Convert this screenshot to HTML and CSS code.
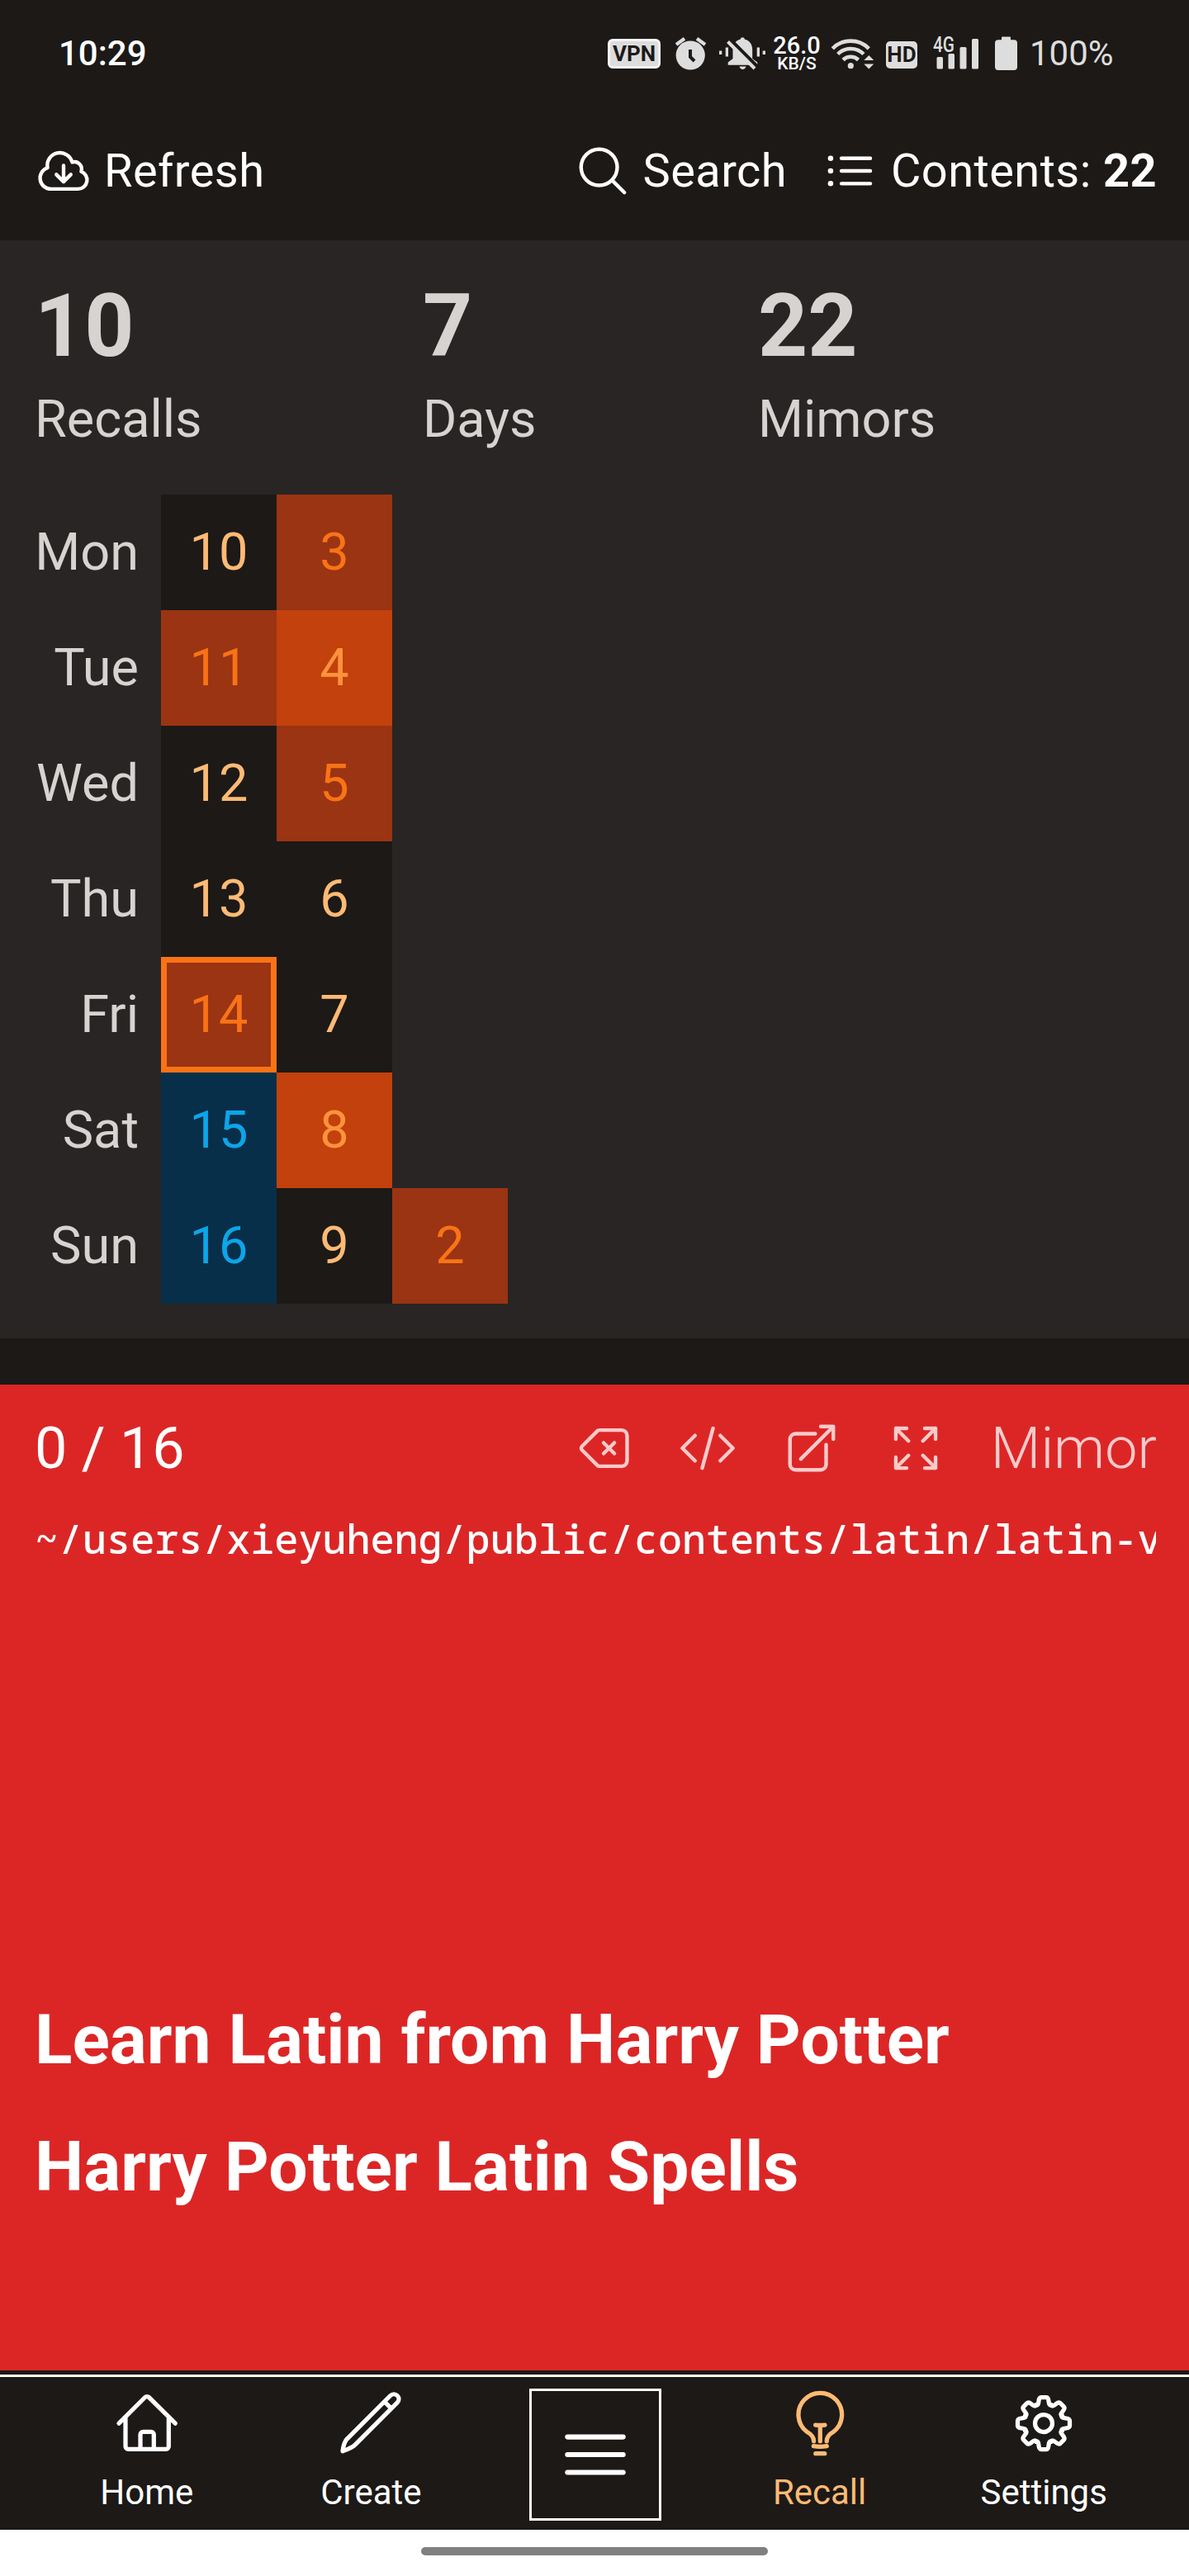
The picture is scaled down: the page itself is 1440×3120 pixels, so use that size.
FILE: index.html
```html
<!DOCTYPE html>
<html lang="en">
<head>
<meta charset="utf-8">
<title>Mimor - Recall</title>
<link rel="stylesheet" href="styles.css">
</head>
<body>
<div class="status-bar">
  <span class="clock">10:29</span>
  <div class="status-icons">
    <span class="tag vpn">VPN</span>
    <svg width="37" height="40" viewBox="0 0 37 40"><circle cx="18.2" cy="22" r="17.6" fill="#ddd"/><path d="M1 9 11 1.8M26 1.8 36 9" stroke="#ddd" stroke-width="4.2"/><path d="M18 15v9l5 5" fill="none" stroke="#1c1917" stroke-width="4"/></svg>
    <svg width="56" height="40" viewBox="0 0 56 40"><path d="M28.3.3c1.500 0 2.500 1 2.500 2.300C37 4 40.200 9 40.200 15v11l6.100 4.500v3.200H10.700v-3.200L16.500 26V15c0-6 3.200-11 9.300-12.400C25.800 1.300 26.800.3 28.300.3ZM24.500 35.500h8c-1 4.500-7 4.500-8 0ZM0 16.500h3.300V21H0ZM7.700 12.500H11v11H7.700ZM45.700 12.500H49v11h-3.300ZM52.700 16.500H56V21h-3.300Z" fill="#ddd"/><path d="M13 2.500 46.500 36" stroke="#1c1917" stroke-width="4.500"/><path d="M10.500 5.500 43 38" stroke="#ddd" stroke-width="4"/></svg>
    <span class="speed"><b>26.0</b><small>KB/S</small></span>
    <svg width="53" height="42" viewBox="0 0 53 42"><g fill="none" stroke="#ddd" stroke-width="4.600"><path d="M2.300 14.800A31 31 0 0 1 46.300 14.800"/><path d="M8.700 21.500A22 22 0 0 1 39.900 21.500"/><path d="M15 28.500A13.500 13.500 0 0 1 33.600 28.500"/></g><circle cx="24.300" cy="35.700" r="3.600" fill="#ddd"/><path d="m46.300 23 6 6h-12ZM46.300 39.500l6-6h-12Z" fill="#ddd"/></svg>
    <span class="tag hd">HD</span>
    <svg class="solid" width="56" height="42" viewBox="0 0 56 42"><text class="net" x="0" y="19" textLength="26" lengthAdjust="spacingAndGlyphs">4G</text><rect x="4.500" y="25" width="7.500" height="14.500" rx="1.500"/><rect x="18.500" y="21" width="7.500" height="18.500" rx="1.500"/><rect x="32.500" y="13" width="8" height="26.500" rx="1.500"/><rect x="47" y="3" width="8" height="36.500" rx="1.500"/></svg>
    <svg class="solid" width="27" height="42" viewBox="0 0 27 42"><path d="M9 .5h9a1 1 0 0 1 1 1v2.700h4a4 4 0 0 1 4 4V37a4 4 0 0 1-4 4H4a4 4 0 0 1-4-4V8.200a4 4 0 0 1 4-4h4V1.500a1 1 0 0 1 1-1Z"/></svg>
    <span class="percent">100%</span>
  </div>
</div>

<header class="toolbar">
  <a class="tool"><svg class="icon" viewBox="0 0 24 24"><path d="M12 9.750v6.750m0 0-3-3m3 3 3-3m-8.250 6a4.500 4.500 0 0 1-1.410-8.775 5.250 5.250 0 0 1 10.233-2.330 3 3 0 0 1 3.758 3.848A3.752 3.752 0 0 1 18 19.500H6.750Z"/></svg>Refresh</a>
  <div class="tools">
    <a class="tool"><svg class="icon" viewBox="0 0 24 24"><path d="m21 21-5.197-5.197m0 0A7.500 7.500 0 1 0 5.196 5.196a7.500 7.500 0 0 0 10.607 10.607Z"/></svg>Search</a>
    <a class="tool"><svg class="icon" viewBox="0 0 24 24"><path d="M8.250 6.750h12M8.250 12h12m-12 5.250h12M3.750 6.750h.007v.008H3.750V6.750Zm.375 0a.375.375 0 1 1-.750 0 .375.375 0 0 1 .750 0ZM3.750 12h.007v.008H3.750V12Zm.375 0a.375.375 0 1 1-.750 0 .375.375 0 0 1 .750 0Zm-.375 5.250h.007v.008H3.750v-.008Zm.375 0a.375.375 0 1 1-.750 0 .375.375 0 0 1 .750 0Z"/></svg><span>Contents: <b>22</b></span></a>
  </div>
</header>

<section class="summary">
  <div class="stats">
    <div class="stat"><strong>10</strong><span>Recalls</span></div>
    <div class="stat"><strong>7</strong><span>Days</span></div>
    <div class="stat"><strong>22</strong><span>Mimors</span></div>
  </div>
  <div class="calendar">
    <span class="day">Mon</span><span class="cell">10</span><span class="cell warm">3</span><span></span>
    <span class="day">Tue</span><span class="cell warm">11</span><span class="cell hot">4</span><span></span>
    <span class="day">Wed</span><span class="cell">12</span><span class="cell warm">5</span><span></span>
    <span class="day">Thu</span><span class="cell">13</span><span class="cell">6</span><span></span>
    <span class="day">Fri</span><span class="cell warm today">14</span><span class="cell">7</span><span></span>
    <span class="day">Sat</span><span class="cell future">15</span><span class="cell hot">8</span><span></span>
    <span class="day">Sun</span><span class="cell future">16</span><span class="cell">9</span><span class="cell warm">2</span>
  </div>
</section>

<main class="card">
  <div class="card-head">
    <span class="progress">0 / 16</span>
    <div class="actions">
      <svg class="icon" viewBox="0 0 24 24"><path d="M12 9.750 14.250 12m0 0 2.250 2.250M14.250 12l2.250-2.250M14.250 12 12 14.250m-2.580 4.920-6.374-6.375a1.125 1.125 0 0 1 0-1.590L9.420 4.830c.210-.211.497-.330.795-.330H19.500a2.250 2.250 0 0 1 2.250 2.250v10.500a2.250 2.250 0 0 1-2.250 2.250h-9.284c-.298 0-.585-.119-.795-.330Z"/></svg>
      <svg class="icon" viewBox="0 0 24 24"><path d="M17.250 6.750 22.500 12l-5.250 5.250m-10.500 0L1.500 12l5.250-5.250m7.500-3-4.500 16.500"/></svg>
      <svg class="icon" viewBox="0 0 24 24"><path d="M13.500 6H5.250A2.250 2.250 0 0 0 3 8.250v10.500A2.250 2.250 0 0 0 5.250 21h10.500A2.250 2.250 0 0 0 18 18.750V10.500m-10.500 6L21 3m0 0h-5.250M21 3v5.250"/></svg>
      <svg class="icon" viewBox="0 0 24 24"><path d="M3.750 3.750v4.500m0-4.500h4.500m-4.500 0L9 9M3.750 20.250v-4.500m0 4.500h4.500m-4.500 0L9 15M20.250 3.750h-4.500m4.500 0v4.500m0-4.500L15 9m5.250 11.250h-4.500m4.500 0v-4.500m0 4.500L15 15"/></svg>
      <span class="kind">Mimor</span>
    </div>
  </div>
  <div class="path">~/users/xieyuheng/public/contents/latin/latin-v</div>
  <div class="titles">
    <h1>Learn Latin from Harry Potter</h1>
    <h1>Harry Potter Latin Spells</h1>
  </div>
</main>

<nav class="nav">
  <a class="nav-item"><svg class="nav-icon" viewBox="0 0 84 84"><path d="M8 42.200 39.700 10.500a3.300 3.300 0 0 1 4.600 0L76.300 42.200M16 35v35a3.300 3.300 0 0 0 3.300 3.300H65a3.300 3.300 0 0 0 3.300-3.300V35M34 73.300V55.600a3.300 3.300 0 0 1 3.300-3.300H47a3.300 3.300 0 0 1 3.300 3.300v17.700"/></svg>Home</a>
  <a class="nav-item"><svg class="nav-icon" viewBox="0 0 84 84"><path d="M65.800 8.500A5.900 5.900 0 0 1 74.200 16.900L23 68.100Q19.500 71.700 8 75.800 9.500 64.500 13.500 60.800ZM58.500 15.800 67 24.200"/></svg>Create</a>
  <a class="menu"><svg viewBox="0 0 24 24"><path d="M3.750 6.750h16.500M3.750 12h16.500m-16.500 5.250h16.500"/></svg></a>
  <a class="nav-item active"><svg class="nav-icon" viewBox="0 0 84 84"><path d="M34.600 63.700c0-4.500-2.700-8.200-8.500-11.400A26.300 26.300 0 1 1 58.500 52.300c-5.600 3.200-8.300 6.900-8.300 11.400M42.300 44.300v19.400M36.600 44.100q5.700.700 11.400 0M34.300 69.700q8 1.500 16 0M36.800 78.700h11"/></svg>Recall</a>
  <a class="nav-item"><svg class="nav-icon" viewBox="-42 -42 84 84"><defs><path id="tooth" d="M-9.200-22.200C-6.500-21.100-6.300-24.500-6-27-5.600-30.800-4.600-31.500-3-31.500H3C4.600-31.500 5.600-30.800 6-27 6.300-24.500 6.500-21.100 9.200-22.200"/></defs><use href="#tooth"/><use href="#tooth" transform="rotate(45)"/><use href="#tooth" transform="rotate(90)"/><use href="#tooth" transform="rotate(135)"/><use href="#tooth" transform="rotate(180)"/><use href="#tooth" transform="rotate(225)"/><use href="#tooth" transform="rotate(270)"/><use href="#tooth" transform="rotate(315)"/><circle r="10.500"/></svg>Settings</a>
</nav>
<div class="gesture"><span class="pill"></span></div>
</body>
</html>
```
FILE: styles.css
```css
* { box-sizing: border-box; }
body {
  margin: 0;
  width: 1440px;
  height: 3120px;
  display: flex;
  flex-direction: column;
  overflow: hidden;
  background: #1c1917;
  color: #fff;
  font-family: Roboto, "Liberation Sans", sans-serif;
}
svg { display: block; fill: none; overflow: visible; }
.solid { fill: #ddd; }

.status-bar {
  height: 122px;
  flex: none;
  display: flex;
  justify-content: space-between;
  padding: 8px 0 0 71px;
  font-size: 42px;
  line-height: 114px;
}
.status-icons {
  width: 704px;
  display: grid;
  grid-template-columns: 82px 53px 64px 71px 67px 57px 75px 42px auto;
  align-items: center;
  line-height: 1;
}
.clock { line-height: 114px; font-weight: 500; }
.percent { color: #ddd; line-height: 114px; }
.tag {
  display: flex;
  align-items: center;
  justify-content: center;
  background: #ddd;
  color: #1c1917;
  font-weight: 700;
  font-size: 26px;
}
.vpn { width: 64px; height: 36px; border: 3px solid #f5f5f5; border-radius: 6px; }
.hd { width: 38px; height: 33px; border-radius: 5px; margin-top: 2px; }
.net { font: 500 26px Roboto, sans-serif; }
.speed {
  width: 60px;
  display: flex;
  flex-direction: column;
  align-items: center;
  white-space: nowrap;
}
.speed b { font-size: 29px; font-weight: 500; line-height: 24px; }
.speed small { font-size: 21px; font-weight: 500; line-height: 20px; }

.icon {
  width: 70px;
  height: 70px;
  flex: none;
  stroke: currentColor;
  stroke-width: 1.5;
  stroke-linecap: round;
  stroke-linejoin: round;
}
.toolbar {
  height: 169px;
  flex: none;
  padding: 0 39px 0 42px;
  display: flex;
  align-items: center;
  justify-content: space-between;
  font-size: 56px;
  line-height: 84px;
  letter-spacing: 0.4px;
}
.tools { display: flex; gap: 42px; }
.tool { display: flex; align-items: center; gap: 14px; }

.summary {
  height: 1330px;
  flex: none;
  padding: 42px;
  background: #292524;
  color: #d6d3d1;
  font-size: 63px;
}
.stats { display: grid; grid-template-columns: 470px 406px auto; margin-bottom: 42px; }
.stat { display: flex; flex-direction: column; line-height: 98px; }
.stat strong { font-size: 105px; line-height: 126px; }
.calendar {
  display: grid;
  grid-template-columns: 153px 140px 140px 140px;
  grid-auto-rows: 140px;
  line-height: 140px;
}
.day { text-align: right; padding-right: 27px; }
.cell { text-align: center; background: #1c1917; color: #fdba74; }
.warm { background: #9a3412; color: #f97316; }
.hot { background: #c2410c; color: #fb923c; }
.future { background: #082f49; color: #0ea5e9; }
.today { border: 7px solid #f97316; line-height: 126px; }

.card {
  height: 1194px;
  flex: none;
  margin-top: 56px;
  padding: 28px 40px 0 42px;
  background: #dc2626;
}
.card-head {
  display: flex;
  justify-content: space-between;
  margin-right: -1px;
  font-size: 70px;
  line-height: 98px;
}
.actions { display: flex; align-items: center; gap: 56px; color: #fecaca; }
.kind { font-weight: 300; }
.path {
  margin-top: 25px;
  overflow: hidden;
  white-space: nowrap;
  font-family: "Droid Sans Mono", "Noto Sans Mono", "Liberation Mono", monospace;
  font-size: 48.4px;
  font-weight: 500;
  line-height: 70px;
}
.titles { margin-top: 517px; display: flex; flex-direction: column; gap: 42px; }
h1 { margin: 0; font-size: 84px; line-height: 112px; font-weight: 700; }

.nav {
  height: 188px;
  flex: none;
  margin-top: 5px;
  border-top: 3px solid #fff;
  padding: 14px 40px 0 42px;
  display: grid;
  grid-template-columns: repeat(5, 1fr);
  justify-items: center;
  font-size: 42px;
  line-height: 56px;
}
.nav-item { display: flex; flex-direction: column; align-items: center; gap: 14px; }
.active { color: #fdba74; }
.nav-icon {
  width: 84px;
  height: 84px;
  stroke: currentColor;
  stroke-width: 5.25;
  stroke-linecap: round;
  stroke-linejoin: round;
}
.menu {
  width: 160px;
  height: 160px;
  border: 3px solid #fff;
  display: flex;
  align-items: center;
  justify-content: center;
}
.menu svg { width: 98px; height: 98px; stroke: #fff; stroke-width: 1.5; stroke-linecap: round; }
.gesture {
  flex: 1;
  background: #fff;
  display: flex;
  align-items: center;
  justify-content: center;
  padding-bottom: 4px;
}
.pill { width: 420px; height: 10px; border-radius: 5px; background: #808080; }
```
